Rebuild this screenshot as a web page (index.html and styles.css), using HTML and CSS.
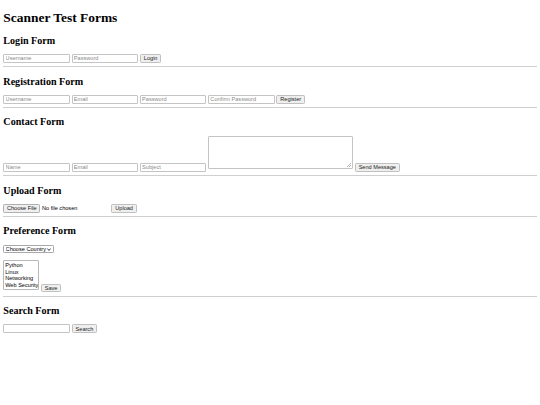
FILE: index.html
```html
<!DOCTYPE html>
<html>
<head>
<meta charset="utf-8">
<title>Scanner Test Forms</title>
<link rel="stylesheet" href="styles.css">
</head>
<body class="page">
<h1 class="title">Scanner Test Forms</h1>

<h2 class="section">Login Form</h2>
<form class="form">
<input class="field" type="text" placeholder="Username">
<input class="field" type="password" placeholder="Password">
<button class="btn" type="button">Login</button>
</form>
<hr class="rule">

<h2 class="section">Registration Form</h2>
<form class="form">
<input class="field" type="text" placeholder="Username">
<input class="field" type="email" placeholder="Email">
<input class="field" type="password" placeholder="Password">
<input class="field" type="password" placeholder="Confirm Password">
<button class="btn" type="button">Register</button>
</form>
<hr class="rule">

<h2 class="section">Contact Form</h2>
<form class="form">
<input class="field" type="text" placeholder="Name">
<input class="field" type="email" placeholder="Email">
<input class="field" type="text" placeholder="Subject">
<textarea class="message"></textarea>
<button class="btn" type="button">Send Message</button>
</form>
<hr class="rule">

<h2 class="section">Upload Form</h2>
<form class="form">
<input class="file" type="file">
<button class="btn" type="button">Upload</button>
</form>
<hr class="rule">

<h2 class="section">Preference Form</h2>
<form class="form">
<select class="dropdown">
<option>Choose Country</option>
</select>
<br><br>
<select class="multi" multiple>
<option>Python</option>
<option>Linux</option>
<option>Networking</option>
<option>Web Security</option>
</select>
<button class="btn" type="button">Save</button>
</form>
<hr class="rule">

<h2 class="section">Search Form</h2>
<form class="form">
<input class="field" type="text">
<button class="btn" type="button">Search</button>
</form>
</body>
</html>
```

FILE: styles.css
```css
.page {
  margin: 3.36px;
  font-family: "Liberation Serif", "Times New Roman", serif;
  font-size: 6.72px;
  color: #000;
  background: #fff;
}
.title {
  font-size: 13.44px;
  margin: 6.3px 0 9px;
}
.section {
  font-size: 10.08px;
  margin: 8.37px 0;
}
.form {
  margin: 0;
}
.field,
.btn,
.dropdown,
.multi,
.message,
.file {
  font-family: "Liberation Sans", Arial, sans-serif;
  font-size: 5.6px;
  color: #000;
}
.field {
  box-sizing: border-box;
  width: 66.57px;
  height: 8.82px;
  padding: 0 1.26px;
  border: 1px solid #c4c4c4;
  border-radius: 1px;
  background: #fff;
  vertical-align: baseline;
}
.field::placeholder {
  color: #8a8a8a;
}
.btn {
  box-sizing: border-box;
  height: 8.82px;
  padding: 0 2.94px;
  border: 1px solid #c0c0c0;
  border-radius: 1.26px;
  background: #efefef;
  color: #222;
}
.message {
  box-sizing: border-box;
  width: 144.9px;
  height: 33.6px;
  border: 1px solid #c4c4c4;
  border-radius: 1px;
  padding: 1px;
  vertical-align: baseline;
  resize: none;
  background-color: #fff;
  background-image:
    linear-gradient(135deg, transparent 45%, #b8b8b8 45%, #b8b8b8 55%, transparent 55%),
    linear-gradient(135deg, transparent 45%, #b8b8b8 45%, #b8b8b8 55%, transparent 55%);
  background-size: 4px 4px, 2px 2px;
  background-position: right 1px bottom 1px, right 1px bottom 1px;
  background-repeat: no-repeat;
}
.file {
  width: 106.26px;
}
.file::file-selector-button {
  font-family: "Liberation Sans", Arial, sans-serif;
  font-size: 5.6px;
  height: 8.82px;
  padding: 0 2.52px;
  border: 1px solid #b0b0b0;
  border-radius: 1.26px;
  background: #efefef;
  color: #222;
  margin-right: 1.7px;
}
.dropdown {
  appearance: none;
  -webkit-appearance: none;
  box-sizing: border-box;
  width: 50.4px;
  height: 8.4px;
  padding: 0 5.88px 0 1.26px;
  border: 1px solid #a8a8a8;
  border-radius: 1.26px;
  background-color: #fff;
  background-image: url("data:image/svg+xml;utf8,<svg xmlns='http://www.w3.org/2000/svg' width='10' height='6' viewBox='0 0 10 6'><path d='M1 1l4 4 4-4' fill='none' stroke='%23222' stroke-width='2'/></svg>");
  background-size: 4.2px 2.6px;
  background-repeat: no-repeat;
  background-position: right 1.7px center;
}
.multi {
  box-sizing: border-box;
  width: 35.7px;
  height: 29.82px;
  border: 1px solid #b8b8b8;
  border-radius: 1px;
  padding: 0.6px 0 0;
  overflow: hidden;
  vertical-align: baseline;
}
.multi option {
  padding: 0.3px 0.84px;
  line-height: 6.72px;
  min-height: 0;
}
.rule {
  margin: 3.36px 0;
  border: 0;
  border-top: 1px solid #cfcfcf;
  height: 0;
}
```
